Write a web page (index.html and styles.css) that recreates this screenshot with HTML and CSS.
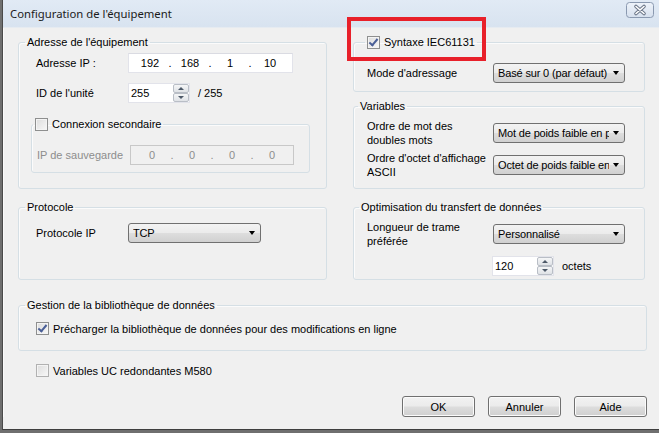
FILE: index.html
```html
<!DOCTYPE html>
<html lang="fr">
<head>
    <meta charset="UTF-8">
    <title>Configuration de l'équipement</title>
    <link rel="stylesheet" href="styles.css">
</head>
<body>

<div class="window">

    <!-- Barre de titre -->
    <div class="titlebar">
        <span class="title">Configuration de l'équipement</span>
        <span class="close">
            <svg width="28" height="16" viewBox="0 0 28 16">
                <defs>
                    <linearGradient id="cg" x1="0" y1="0" x2="0" y2="1">
                        <stop offset="0" stop-color="#eef3fa"/>
                        <stop offset="1" stop-color="#d6e0ee"/>
                    </linearGradient>
                </defs>
                <rect x="0.5" y="0.5" width="27" height="15" rx="3" fill="url(#cg)" stroke="#8a99b0"/>
                <path d="M10 4.5 L18 11.5 M18 4.5 L10 11.5" stroke="#6b7688" stroke-width="3.6" stroke-linecap="round"/>
                <path d="M10 4.5 L18 11.5 M18 4.5 L10 11.5" stroke="#ffffff" stroke-width="1.6" stroke-linecap="round"/>
            </svg>
        </span>
    </div>

    <div class="client">
        <div class="grid">

            <!-- Adresse -->
            <fieldset class="group g-adresse">
                <legend>Adresse de l'équipement</legend>
                <div class="gbody">
                    <div class="row r-ip">
                        <span class="lbl">Adresse IP :</span>
                        <div class="ipfield">
                            <span class="seg">192</span><span class="dot">.</span>
                            <span class="seg">168</span><span class="dot">.</span>
                            <span class="seg">1</span><span class="dot">.</span>
                            <span class="seg">10</span>
                        </div>
                    </div>
                    <div class="row r-id">
                        <span class="lbl">ID de l'unité</span>
                        <div class="spin">
                            <span class="spin-val">255</span>
                            <span class="spin-btn"><i class="up"></i><i class="down"></i></span>
                        </div>
                        <span class="after">/ 255</span>
                    </div>

                    <fieldset class="group g-second">
                        <legend><span class="check"></span>Connexion secondaire</legend>
                        <div class="gbody">
                            <div class="row r-backup">
                                <span class="lbl disabled">IP de sauvegarde</span>
                                <div class="ipfield off">
                                    <span class="seg">0</span><span class="dot">.</span>
                                    <span class="seg">0</span><span class="dot">.</span>
                                    <span class="seg">0</span><span class="dot">.</span>
                                    <span class="seg">0</span>
                                </div>
                            </div>
                        </div>
                    </fieldset>
                </div>
            </fieldset>

            <!-- Colonne de droite -->
            <div class="stack">
                <fieldset class="group g-syntax">
                    <legend><span class="check on"></span>Syntaxe IEC61131</legend>
                    <div class="gbody">
                        <div class="row r-mode">
                            <span class="lbl wide">Mode d'adressage</span>
                            <div class="combo"><span class="combo-text">Basé sur 0 (par défaut)</span><i class="arrow"></i></div>
                        </div>
                    </div>
                </fieldset>

                <fieldset class="group g-vars">
                    <legend>Variables</legend>
                    <div class="gbody">
                        <div class="row r-word">
                            <span class="lbl wide two">Ordre de mot des<br>doubles mots</span>
                            <div class="combo"><span class="combo-text">Mot de poids faible en premier</span><i class="arrow"></i></div>
                        </div>
                        <div class="row r-byte">
                            <span class="lbl wide two">Ordre d'octet d'affichage<br>ASCII</span>
                            <div class="combo"><span class="combo-text">Octet de poids faible en premier</span><i class="arrow"></i></div>
                        </div>
                    </div>
                </fieldset>
            </div>

            <!-- Protocole -->
            <fieldset class="group g-proto">
                <legend>Protocole</legend>
                <div class="gbody">
                    <div class="row r-proto">
                        <span class="lbl">Protocole IP</span>
                        <div class="combo c-tcp"><span class="combo-text">TCP</span><i class="arrow"></i></div>
                    </div>
                </div>
            </fieldset>

            <!-- Optimisation -->
            <fieldset class="group g-optim">
                <legend>Optimisation du transfert de données</legend>
                <div class="gbody">
                    <div class="row r-frame">
                        <span class="lbl wide two">Longueur de trame<br>préférée</span>
                        <div class="combo"><span class="combo-text">Personnalisé</span><i class="arrow"></i></div>
                    </div>
                    <div class="row r-bytes">
                        <div class="spin">
                            <span class="spin-val">120</span>
                            <span class="spin-btn"><i class="up"></i><i class="down"></i></span>
                        </div>
                        <span class="after">octets</span>
                    </div>
                </div>
            </fieldset>

            <!-- Bibliothèque -->
            <fieldset class="group g-lib">
                <legend>Gestion de la bibliothèque de données</legend>
                <div class="gbody">
                    <div class="row r-lib">
                        <span class="check on"></span>Précharger la bibliothèque de données pour des modifications en ligne
                    </div>
                </div>
            </fieldset>
        </div>

        <div class="row r-m580">
            <span class="check light"></span>Variables UC redondantes M580
        </div>

        <div class="buttons">
            <button class="btn">OK</button>
            <button class="btn">Annuler</button>
            <button class="btn">Aide</button>
        </div>
    </div>

    <!-- Annotation -->
    <div class="highlight"></div>
</div>

</body>
</html>
```

FILE: styles.css
```css
html, body {
    margin: 0;
    padding: 0;
}
body {
    width: 659px;
    height: 433px;
    overflow: hidden;
    background: #6f6f6f;
    font-family: "Liberation Sans", Arial, sans-serif;
    font-size: 11px;
    color: #000;
}
.window {
    position: relative;
    margin-left: 2px;
    width: 657px;
    height: 430px;
    border-left: 1px solid #4a4a4a;
    border-bottom: 1px solid #3e3e3e;
    background: #f0f0f0;
    box-sizing: border-box;
}
.titlebar {
    height: 28px;
    display: flex;
    align-items: center;
    justify-content: space-between;
    padding: 0 5px 0 7px;
    background: linear-gradient(#e1eaf5, #d8e3f0);
    border-bottom: 1px solid #e6ebf1;
    box-sizing: border-box;
}
.title {
    font-family: "Noto Sans", sans-serif;
    font-size: 11.3px;
    color: #1b1b1b;
    margin-top: -1px;
}
.close {
    display: flex;
    margin-top: -7px;
}
.client {
    padding: 8px 12px 0 14px;
    border-left: 1px solid #fafafa;
}
.grid {
    display: grid;
    grid-template-columns: 309px 292px;
    column-gap: 26px;
    row-gap: 12px;
}

/* Groupes */
.group {
    margin: 0;
    padding: 0;
    border: 1px solid #d5dfe5;
    border-radius: 3px;
    box-shadow: inset 1px 1px 0 #fbfbfb;
    min-width: 0;
}
.group legend {
    padding: 0 2px;
    margin-left: 6px;
    line-height: 13px;
    height: 13px;
    display: flex;
    align-items: center;
    white-space: nowrap;
}
.stack {
    display: flex;
    flex-direction: column;
    gap: 8px;
}
.row {
    display: flex;
    align-items: center;
}
.lbl {
    width: 92px;
    flex: none;
}
.lbl.wide {
    width: 126px;
}
.lbl.two {
    line-height: 14px;
}
.disabled {
    color: #8d8d8d;
}
.after {
    margin-left: 8px;
}

/* Adresse */
.g-adresse > .gbody {
    padding: 0 16px 15px 12px;
}
.g-adresse > .gbody > .row {
    padding-left: 5px;
}
.r-ip { margin-top: 4px; }
.r-id { margin-top: 10px; }
.g-second {
    margin-top: 15px;
}
.g-second legend {
    margin-left: 1px;
}
.g-second > .gbody {
    padding: 0 15px 7px 5px;
}
.r-backup { margin-top: 14px; }
.r-backup .lbl { width: 93px; }

/* Champs IP */
.ipfield {
    width: 165px;
    height: 20px;
    box-sizing: border-box;
    background: #fff;
    border: 1px solid #e2e3ea;
    border-top-color: #dadbe2;
    display: flex;
    align-items: center;
    padding-left: 3px;
}
.ipfield .seg {
    width: 36px;
    text-align: center;
}
.ipfield .dot {
    width: 4px;
    text-align: center;
}
.ipfield.off {
    background: #f0f0f0;
    border-color: #c8c8c8;
    color: #8d8d8d;
}

/* Spin */
.spin {
    width: 62px;
    height: 20px;
    box-sizing: border-box;
    background: #fff;
    border: 1px solid #e2e3ea;
    display: flex;
    align-items: center;
    justify-content: space-between;
    padding-left: 2px;
}
.spin-btn {
    width: 16px;
    height: 18px;
    display: flex;
    flex-direction: column;
}
.spin-btn i {
    flex: 1;
    border: 1px solid #b9bec6;
    border-radius: 2px;
    background: linear-gradient(#f5f6f7, #dfe2e6);
    position: relative;
}
.spin-btn i::after {
    content: "";
    position: absolute;
    left: 4px;
    top: 2px;
    border-left: 3px solid transparent;
    border-right: 3px solid transparent;
}
.spin-btn .up::after {
    border-bottom: 3px solid #4d5968;
}
.spin-btn .down::after {
    border-top: 3px solid #4d5968;
}

/* Combo */
.combo {
    width: 132px;
    height: 20px;
    box-sizing: border-box;
    border: 1px solid #707070;
    border-radius: 3px;
    background: linear-gradient(#f3f3f3 0%, #ebebeb 48%, #dddddd 52%, #d0d0d0 100%);
    display: flex;
    align-items: center;
    padding: 0 5px 0 4px;
}
.combo-text {
    flex: 1;
    overflow: hidden;
    white-space: nowrap;
    letter-spacing: -0.15px;
    margin-right: 4px;
}
.combo .arrow {
    flex: none;
    width: 0;
    height: 0;
    border-left: 3.5px solid transparent;
    border-right: 3.5px solid transparent;
    border-top: 4px solid #000;
}
.c-tcp {
    width: 133px;
}

/* Colonne de droite */
.g-syntax legend {
    margin-left: 11px;
}
.g-syntax > .gbody {
    padding: 0 18px 8px 13px;
}
.r-mode { margin-top: 14px; }
.g-vars legend {
    margin-left: 4px;
}
.g-vars > .gbody {
    padding: 0 18px 9px 13px;
}
.r-word { margin-top: 6px; }
.r-byte { margin-top: 4px; }

/* Protocole / Optimisation */
.g-proto > .gbody {
    padding: 0 17px 35px 17px;
}
.r-proto { margin-top: 9px; }
.g-optim legend {
    margin-left: 5px;
}
.g-optim > .gbody {
    padding: 0 18px 3px 13px;
}
.r-frame { margin-top: 6px; }
.r-bytes {
    margin-top: 8px;
    padding-left: 125px;
}

/* Bibliothèque */
.g-lib {
    grid-column: 1 / 3;
    margin: 7px -2px 0 0;
}
.g-lib > .gbody {
    padding: 0 17px 15px 17px;
}
.r-lib { margin-top: 10px; }
.r-m580 {
    margin-top: 13px;
    padding-left: 18px;
}

/* Cases à cocher */
.check {
    flex: none;
    width: 13px;
    height: 13px;
    box-sizing: border-box;
    border: 1px solid #8e8f8f;
    background: linear-gradient(135deg, #dcdcdc, #f8f8f8);
    box-shadow: inset 0 0 0 1px #f4f4f4;
    margin-right: 4px;
    position: relative;
}
.check.on::after {
    content: "";
    position: absolute;
    left: 3px;
    top: 0px;
    width: 3px;
    height: 7px;
    border-right: 2px solid #4a5f97;
    border-bottom: 2px solid #4a5f97;
    transform: rotate(40deg);
}
.check.light {
    border-color: #b1b1b1;
}

/* Boutons */
.buttons {
    display: flex;
    justify-content: flex-end;
    gap: 13px;
    margin-top: 19px;
}
.btn {
    width: 73px;
    height: 21px;
    font-family: "Liberation Sans", Arial, sans-serif;
    font-size: 11px;
    color: #000;
    border: 1px solid #707070;
    border-radius: 3px;
    background: linear-gradient(#f2f2f2 0%, #ebebeb 48%, #dddddd 52%, #cfcfcf 100%);
    box-shadow: inset 0 0 0 1px #fbfbfb;
    padding: 0;
}

/* Annotation rouge */
.highlight {
    position: absolute;
    left: 344px;
    top: 17px;
    width: 139px;
    height: 44px;
    box-sizing: border-box;
    border: 4px solid #e8202a;
}
```
